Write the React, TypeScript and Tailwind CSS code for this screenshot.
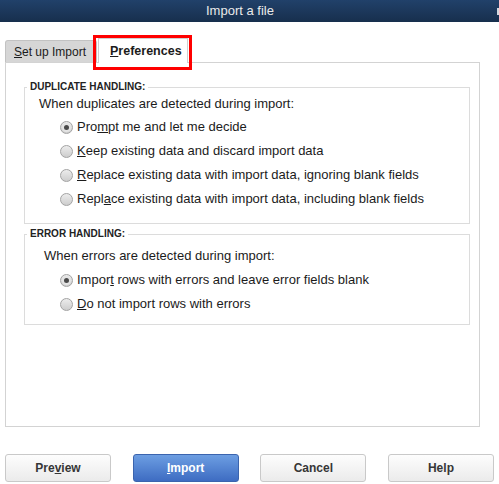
import type { ReactNode } from "react";

const font = { fontFamily: '"Liberation Sans", Arial, sans-serif' };

function Radio({ checked, children }: { checked?: boolean; children: ReactNode }) {
  return (
    <div className="flex h-[24px] items-center">
      <span className="flex h-[13px] w-[13px] items-center justify-center rounded-full border border-[#a3a3a3] bg-gradient-to-b from-[#ececec] to-[#cdcdcd]">
        {checked && (
          <span className="flex h-[9px] w-[9px] items-center justify-center rounded-full bg-[#e4e4e4]">
            <span className="h-[5px] w-[5px] rounded-full bg-[#4a4a4a]" />
          </span>
        )}
      </span>
      <span className="ml-[4px] text-[13px] leading-[16px] text-[#1b1b1b]">{children}</span>
    </div>
  );
}

function Group({ title, className, children }: { title: string; className?: string; children: ReactNode }) {
  return (
    <fieldset className={`border border-[#dcdcdc] ${className ?? ""}`}>
      <legend className="ml-[2px] px-[3px] text-[10px] font-bold leading-[12px] text-[#222]">{title}</legend>
      {children}
    </fieldset>
  );
}

function Button({ primary, children }: { primary?: boolean; children: ReactNode }) {
  return (
    <button
      className={
        primary
          ? "flex h-[28px] w-[106px] items-center justify-center rounded-[3px] border border-[#3b64ae] bg-gradient-to-b from-[#6d9ee2] to-[#3e6cc2] text-[12px] font-bold text-white"
          : "flex h-[28px] w-[106px] items-center justify-center rounded-[3px] border border-[#c9c9c9] bg-gradient-to-b from-[#fdfdfd] to-[#ebebeb] text-[12px] font-bold text-[#363636]"
      }
    >
      {children}
    </button>
  );
}

export default function App() {
  return (
    <div className="h-[484px] w-[499px] overflow-hidden bg-white" style={font}>
      {/* Title bar */}
      <div className="flex h-[22px] items-center bg-gradient-to-b from-[#21416a] to-[#172f4d]">
        <span className="pl-[206px] text-[13px] leading-[16px] text-[#eaeaea]">Import a file</span>
        <span className="ml-auto h-[7px] w-[2px] bg-white/80" />
      </div>

      {/* Tabs */}
      <div className="flex h-[40px] items-end pl-[5px]">
        <div className="flex h-[22px] w-[92px] items-center whitespace-nowrap rounded-t-[3px] border border-b-0 border-[#c2c2c2] bg-[#d6d6d6] pl-[8px] text-[12px] text-[#1b1b1b]">
          <span>
            <u>S</u>et up Import
          </span>
        </div>
        <div className="relative z-10 -mb-px ml-[1px] flex h-[25px] w-[90px] items-center whitespace-nowrap border border-b-0 border-[#cfcfcf] bg-white pl-[11px] text-[12.5px] font-bold text-[#1b1b1b]">
          <span>
            <u>P</u>references
          </span>
          <div className="absolute -left-[6px] -top-[4px] h-[35px] w-[99px] border-[3px] border-[#ff0000]" />
        </div>
      </div>

      {/* Panel */}
      <div className="ml-[5px] h-[365px] w-[475px] border border-[#d3d3d3] pl-[18px] pr-[9px] pt-[18px]">
        <Group title="DUPLICATE HANDLING:" className="pb-[12px]">
          <div className="pl-[14px]">
            <div className="mt-[3px] text-[13px] leading-[16px] text-[#1b1b1b]">When duplicates are detected during import:</div>
            <div className="mt-[3px] pl-[21px]">
              <Radio checked>
                Pro<u>m</u>pt me and let me decide
              </Radio>
              <Radio>
                <u>K</u>eep existing data and discard import data
              </Radio>
              <Radio>
                <u>R</u>eplace existing data with import data, ignoring blank fields
              </Radio>
              <Radio>
                Repl<u>a</u>ce existing data with import data, including blank fields
              </Radio>
            </div>
          </div>
        </Group>

        <Group title="ERROR HANDLING:" className="mt-[4px] pb-[8px]">
          <div className="pl-[19px]">
            <div className="mt-[8px] text-[13px] leading-[16px] text-[#1b1b1b]">When errors are detected during import:</div>
            <div className="mt-[4px] pl-[16px]">
              <Radio checked>
                Impor<u>t</u> rows with errors and leave error fields blank
              </Radio>
              <Radio>
                <u>D</u>o not import rows with errors
              </Radio>
            </div>
          </div>
        </Group>
      </div>

      {/* Buttons */}
      <div className="ml-[5px] mt-[27px] flex w-[489px] justify-between">
        <Button>
          Pre<u>v</u>iew
        </Button>
        <Button primary>
          <u>I</u>mport
        </Button>
        <Button>Cancel</Button>
        <Button>Help</Button>
      </div>
    </div>
  );
}
